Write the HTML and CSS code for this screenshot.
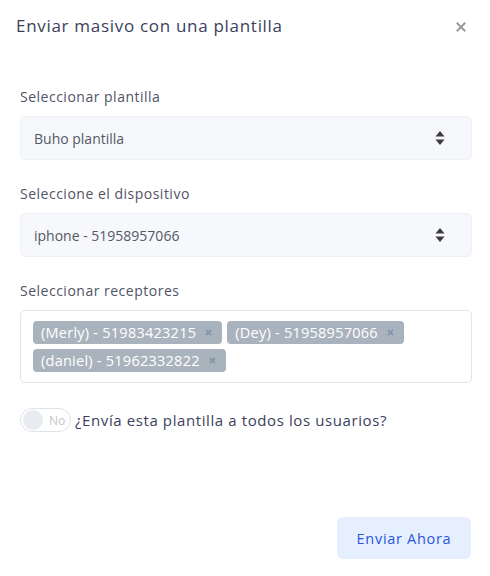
FILE: index.html
```html
<!DOCTYPE html>
<html lang="es">
<head>
<meta charset="utf-8">
<title>Enviar masivo</title>
<link rel="stylesheet" href="styles.css">
</head>
<body>
<div class="modal">
  <div class="modal-header">
    <h5 class="modal-title">Enviar masivo con una plantilla</h5>
    <button class="close" type="button" aria-label="Cerrar">
      <svg width="10" height="10" viewBox="0 0 10 10"><path d="M1.5 1.5 L8.5 8.5 M8.5 1.5 L1.5 8.5" stroke="#9a9a9a" stroke-width="2" stroke-linecap="square"/></svg>
    </button>
  </div>
  <div class="modal-body">
    <div class="field">
      <label class="label">Seleccionar plantilla</label>
      <div class="select">
        <span>Buho plantilla</span>
        <svg class="caret" width="10" height="16" viewBox="0 0 10 16"><path d="M5 1 L9.5 6.5 H0.5 Z M0.5 9.5 H9.5 L5 15 Z" fill="#3b3b3b"/></svg>
      </div>
    </div>
    <div class="field">
      <label class="label">Seleccione el dispositivo</label>
      <div class="select">
        <span>iphone - 51958957066</span>
        <svg class="caret" width="10" height="16" viewBox="0 0 10 16"><path d="M5 1 L9.5 6.5 H0.5 Z M0.5 9.5 H9.5 L5 15 Z" fill="#3b3b3b"/></svg>
      </div>
    </div>
    <div class="field">
      <label class="label">Seleccionar receptores</label>
      <div class="multi">
        <span class="tag">(Merly) - 51983423215<svg class="tag-x" width="7" height="7" viewBox="0 0 7 7"><path d="M1 1 L6 6 M6 1 L1 6" stroke="#8396ad" stroke-width="1.8"/></svg></span>
        <span class="tag">(Dey) - 51958957066<svg class="tag-x" width="7" height="7" viewBox="0 0 7 7"><path d="M1 1 L6 6 M6 1 L1 6" stroke="#8396ad" stroke-width="1.8"/></svg></span>
        <span class="tag">(daniel) - 51962332822<svg class="tag-x" width="7" height="7" viewBox="0 0 7 7"><path d="M1 1 L6 6 M6 1 L1 6" stroke="#8396ad" stroke-width="1.8"/></svg></span>
      </div>
    </div>
    <div class="switch-row">
      <span class="switch"><span class="knob"></span><span class="switch-text">No</span></span>
      <span class="switch-label">¿Envía esta plantilla a todos los usuarios?</span>
    </div>
  </div>
  <div class="modal-footer">
    <button class="btn" type="button">Enviar Ahora</button>
  </div>
</div>
</body>
</html>
```
FILE: styles.css
```css
* { box-sizing: border-box; }
html, body { margin: 0; padding: 0; background: #fff; }
body {
  font-family: "Open Sans", "Liberation Sans", sans-serif;
  width: 490px;
  height: 576px;
  overflow: hidden;
}
.modal { display: flex; flex-direction: column; height: 576px; }
.modal-header {
  display: flex;
  justify-content: space-between;
  align-items: center;
  padding: 13px 24px 0 16px;
  height: 39px;
}
.modal-title {
  margin: 0;
  font-size: 17px;
  font-weight: 400;
  letter-spacing: 0.7px;
  color: #3b3f5c;
  line-height: 24px;
}
.close {
  border: 0;
  background: none;
  padding: 0;
  margin-top: 2px;
  display: flex;
}
.modal-body { padding: 48px 18px 0 20px; }
.field { margin-bottom: 24px; }
.label {
  display: block;
  font-size: 14px;
  letter-spacing: 0.5px;
  line-height: 20px;
  color: #515365;
  margin-bottom: 9px;
}
.select {
  height: 44px;
  background: #f6f8fb;
  border: 1px solid #eef1f5;
  border-radius: 5px;
  display: flex;
  align-items: center;
  justify-content: space-between;
  padding: 0 26px 0 13px;
  font-size: 14px;
  color: #555866;
}
.multi {
  border: 1px solid #e0e6ed;
  border-radius: 5px;
  padding: 10px 12px 10px 12px;
  display: flex;
  flex-wrap: wrap;
  gap: 5px;
  min-height: 73px;
}
.tag {
  display: inline-flex;
  align-items: center;
  height: 23px;
  padding: 0 10px 0 8px;
  background: #a9b3bd;
  color: #fff;
  border-radius: 4px;
  font-size: 14.5px;
  font-weight: 500;
  letter-spacing: 0.25px;
  white-space: nowrap;
}
.tag-x {
  margin-left: 9px;
  flex: none;
}
.switch-row {
  display: flex;
  align-items: center;
  margin-top: 25px;
}
.switch {
  width: 51px;
  height: 24px;
  border: 1px solid #dfe3e8;
  border-radius: 12px;
  display: flex;
  align-items: center;
  padding: 0 2px;
}
.knob {
  width: 20px;
  height: 20px;
  border-radius: 50%;
  background: #e8ebef;
}
.switch-text {
  font-size: 12px;
  color: #c2c6cc;
  margin-left: 6px;
}
.switch-label {
  margin-left: 4px;
  font-size: 15px;
  letter-spacing: 0.6px;
  color: #3b3f5c;
}
.modal-footer {
  margin-top: auto;
  display: flex;
  justify-content: flex-end;
  padding: 0 19px 17px 0;
}
.btn {
  width: 134px;
  height: 42px;
  border: 0;
  border-radius: 6px;
  background: #e6effd;
  color: #2b55e0;
  font-family: inherit;
  font-size: 14.5px;
  letter-spacing: 0.7px;
}
```
